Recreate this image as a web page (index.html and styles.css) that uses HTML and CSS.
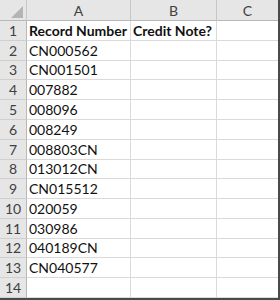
FILE: index.html
```html
<!DOCTYPE html>
<html>
<head>
<meta charset="utf-8">
<link rel="stylesheet" href="styles.css">
</head>
<body>
<div class="sheet">
  <div class="corner"><svg class="tri" width="12" height="12" viewBox="0 0 12 12"><polygon points="12,0 12,12 0,12" fill="#b4b4b4"/></svg></div>
  <div class="colhead">A</div>
  <div class="colhead">B</div>
  <div class="colhead last">C</div>

  <div class="rownum">1</div><div class="cell bold">Record Number</div><div class="cell bold">Credit Note?</div><div class="cell last"></div>
  <div class="rownum">2</div><div class="cell">CN000562</div><div class="cell"></div><div class="cell last"></div>
  <div class="rownum">3</div><div class="cell">CN001501</div><div class="cell"></div><div class="cell last"></div>
  <div class="rownum">4</div><div class="cell">007882</div><div class="cell"></div><div class="cell last"></div>
  <div class="rownum">5</div><div class="cell">008096</div><div class="cell"></div><div class="cell last"></div>
  <div class="rownum">6</div><div class="cell">008249</div><div class="cell"></div><div class="cell last"></div>
  <div class="rownum">7</div><div class="cell">008803CN</div><div class="cell"></div><div class="cell last"></div>
  <div class="rownum">8</div><div class="cell">013012CN</div><div class="cell"></div><div class="cell last"></div>
  <div class="rownum">9</div><div class="cell">CN015512</div><div class="cell"></div><div class="cell last"></div>
  <div class="rownum">10</div><div class="cell">020059</div><div class="cell"></div><div class="cell last"></div>
  <div class="rownum">11</div><div class="cell">030986</div><div class="cell"></div><div class="cell last"></div>
  <div class="rownum">12</div><div class="cell">040189CN</div><div class="cell"></div><div class="cell last"></div>
  <div class="rownum">13</div><div class="cell">CN040577</div><div class="cell"></div><div class="cell last"></div>
  <div class="rownum">14</div><div class="cell"></div><div class="cell"></div><div class="cell last"></div>
</div>
</body>
</html>
```
FILE: styles.css
```css
html, body {
  margin: 0;
  padding: 0;
  background: #ffffff;
}
.sheet {
  width: 278px;
  height: 298px;
  display: grid;
  grid-template-columns: 27px 104px 86px 61px;
  grid-template-rows: 21px repeat(14, 1fr);
  border-right: 2px solid #4a4a4a;
  border-bottom: 2px solid #4a4a4a;
  font-family: Lato, "Open Sans", sans-serif;
  font-size: 14px;
  color: #111111;
  overflow: hidden;
}
.corner {
  background: #e6e6e6;
  border-right: 1px solid #c6c6c6;
  border-bottom: 1px solid #b8b8b8;
  display: flex;
  justify-content: flex-end;
  align-items: flex-end;
  padding: 0 3px 2px 0;
}
.colhead {
  background: #e6e6e6;
  border-right: 1px solid #c6c6c6;
  border-bottom: 1px solid #b8b8b8;
  color: #404040;
  display: flex;
  align-items: center;
  justify-content: center;
  padding-top: 1px;
}
.colhead.last {
  border-right: none;
}
.rownum {
  background: #e6e6e6;
  border-right: 1px solid #b8b8b8;
  border-bottom: 1px solid #cfcfcf;
  color: #404040;
  display: flex;
  align-items: flex-end;
  justify-content: center;
  padding-bottom: 1px;
}
.cell {
  border-right: 1px solid #dadada;
  border-bottom: 1px solid #dadada;
  display: flex;
  align-items: flex-end;
  padding: 0 0 1px 2px;
  white-space: nowrap;
  overflow: visible;
}
.cell.last {
  border-right: none;
}
.bold {
  font-weight: bold;
}
```
